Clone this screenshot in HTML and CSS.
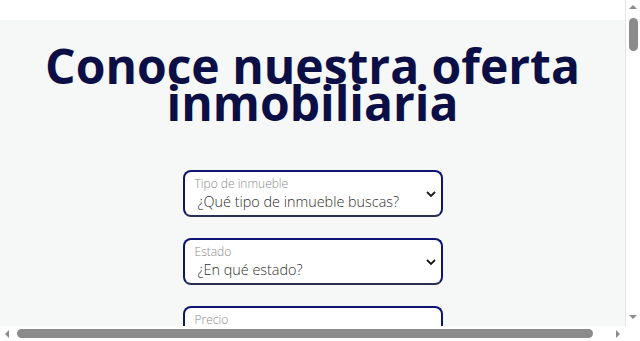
FILE: index.html
```html
<!DOCTYPE html>
<html lang="es">
<head>
  <meta charset="UTF-8">
  <meta name="viewport" content="width=device-width, initial-scale=1.0">
  <title>Conoce nuestra oferta inmobiliaria</title>
  <link rel="stylesheet" href="styles.css">
</head>
<body>

<header class="topbar"></header>

<main class="oferta">
  <h1 class="titulo">Conoce nuestra oferta inmobiliaria</h1>

  <form class="filtros">
    <div class="campo">
      <div class="campo-cuerpo">
        <label for="tipo">Tipo de inmueble</label>
        <select id="tipo">
          <option>¿Qué tipo de inmueble buscas?</option>
          <option>Casa</option>
          <option>Departamento</option>
          <option>Terreno</option>
        </select>
      </div>
      <svg class="chevron" viewBox="0 0 10 6" width="10" height="6"><path d="M1 1l4 4 4-4" fill="none" stroke="#1a1a1a" stroke-width="1.8"/></svg>
    </div>

    <div class="campo">
      <div class="campo-cuerpo">
        <label for="estado">Estado</label>
        <select id="estado">
          <option>¿En qué estado?</option>
          <option>Jalisco</option>
          <option>Nuevo León</option>
        </select>
      </div>
      <svg class="chevron" viewBox="0 0 10 6" width="10" height="6"><path d="M1 1l4 4 4-4" fill="none" stroke="#1a1a1a" stroke-width="1.8"/></svg>
    </div>

    <div class="campo">
      <div class="campo-cuerpo">
        <label for="precio">Precio</label>
        <input id="precio" type="text" placeholder="¿Cuál es tu presupuesto?">
      </div>
    </div>
  </form>
</main>

<!-- barras de desplazamiento de la ventana -->
<div class="scroll-v">
  <span class="flecha flecha-arriba"></span>
  <span class="thumb-v"></span>
  <span class="hueco"></span>
  <span class="flecha flecha-abajo"></span>
</div>
<div class="scroll-h">
  <span class="flecha flecha-izq"></span>
  <span class="thumb-h"></span>
  <span class="flecha flecha-der"></span>
</div>
<div class="scroll-esquina"></div>

</body>
</html>
```

FILE: styles.css
```css
html, body {
  margin: 0;
  padding: 0;
}

body {
  background-color: #f6f7f7;
  font-family: "Open Sans", Arial, sans-serif;
  padding-right: 15px;
}

.topbar {
  height: 20px;
  background-color: #ffffff;
}

.oferta {
  min-height: 3000px;
  padding: 27px 0 40px;
  text-align: center;
}

.titulo {
  margin: 0;
  font-size: 48px;
  font-weight: 700;
  line-height: 37px;
  color: #0b0f45;
}

.filtros {
  width: 260px;
  margin: 49px auto 0;
  display: flex;
  flex-direction: column;
  gap: 21px;
}

.campo {
  box-sizing: border-box;
  height: 47px;
  display: flex;
  align-items: center;
  padding: 0 5px 0 10px;
  background-color: #ffffff;
  border: 2px solid #0d1573;
  border-bottom-color: #2a2f55;
  border-radius: 8px;
  text-align: left;
}

.campo-cuerpo {
  flex: 1;
  display: flex;
  flex-direction: column;
  padding-top: 2px;
}

.campo label {
  font-size: 12px;
  font-weight: 300;
  line-height: 14px;
  color: #8a8a8a;
}

.campo select,
.campo input {
  appearance: none;
  border: none;
  outline: none;
  background: transparent;
  padding: 0 0 0 3px;
  margin: 0;
  font-family: "Open Sans", Arial, sans-serif;
  font-size: 14.4px;
  font-weight: 300;
  line-height: 22px;
  color: #2e2e2e;
}

.chevron {
  flex: none;
}

/* scrollbars */
.scroll-v {
  position: fixed;
  top: 0;
  right: 0;
  width: 15px;
  height: 326px;
  box-sizing: border-box;
  background-color: #ffffff;
  border-left: 1px solid #e4e4e4;
  display: flex;
  flex-direction: column;
  align-items: center;
}

.scroll-h {
  position: fixed;
  left: 0;
  bottom: 0;
  width: 625px;
  height: 15px;
  background-color: #ffffff;
  display: flex;
  align-items: center;
}

.scroll-esquina {
  position: fixed;
  right: 0;
  bottom: 0;
  width: 15px;
  height: 15px;
  background-color: #ffffff;
}

.flecha {
  width: 0;
  height: 0;
  flex: none;
}

.flecha-arriba {
  margin-top: 5px;
  border-left: 4px solid transparent;
  border-right: 4px solid transparent;
  border-bottom: 4px solid #8b8b8b;
}

.flecha-abajo {
  margin-bottom: 7px;
  border-left: 4px solid transparent;
  border-right: 4px solid transparent;
  border-top: 4px solid #8b8b8b;
}

.flecha-izq {
  margin-left: 5px;
  border-top: 4px solid transparent;
  border-bottom: 4px solid transparent;
  border-right: 4px solid #8b8b8b;
}

.flecha-der {
  margin-left: auto;
  margin-right: 5px;
  border-top: 4px solid transparent;
  border-bottom: 4px solid transparent;
  border-left: 4px solid #8b8b8b;
}

.thumb-v {
  width: 9px;
  height: 33px;
  margin-top: 9px;
  background-color: #8b8b8b;
  border-radius: 5px;
}

.hueco {
  flex: 1;
}

.thumb-h {
  width: 576px;
  height: 9px;
  margin-left: 8px;
  background-color: #8b8b8b;
  border-radius: 5px;
}
```
